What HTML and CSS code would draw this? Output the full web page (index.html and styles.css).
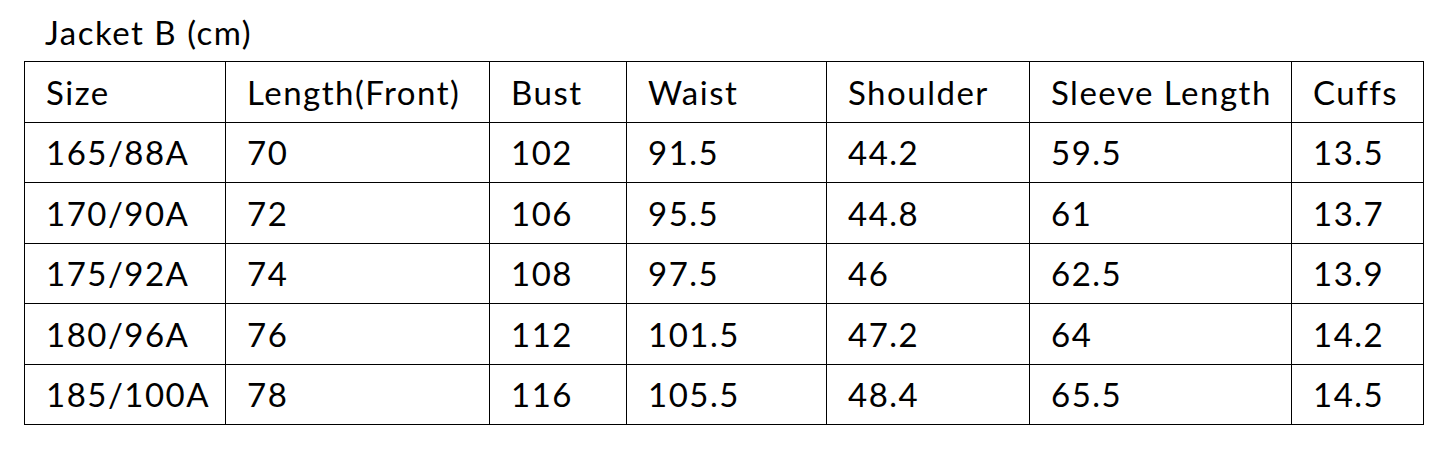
FILE: index.html
```html
<!DOCTYPE html>
<html>
<head>
<meta charset="utf-8">
<link rel="stylesheet" href="styles.css">
</head>
<body>
<div class="sheet">
  <div class="title">Jacket B (cm)</div>
  <table class="sizes">
    <colgroup>
      <col class="c1"><col class="c2"><col class="c3"><col class="c4"><col class="c5"><col class="c6"><col class="c7">
    </colgroup>
    <tr><td>Size</td><td>Length(Front)</td><td>Bust</td><td>Waist</td><td>Shoulder</td><td>Sleeve Length</td><td>Cuffs</td></tr>
    <tr><td>165/88A</td><td>70</td><td>102</td><td>91.5</td><td>44.2</td><td>59.5</td><td>13.5</td></tr>
    <tr><td>170/90A</td><td>72</td><td>106</td><td>95.5</td><td>44.8</td><td>61</td><td>13.7</td></tr>
    <tr><td>175/92A</td><td>74</td><td>108</td><td>97.5</td><td>46</td><td>62.5</td><td>13.9</td></tr>
    <tr><td>180/96A</td><td>76</td><td>112</td><td>101.5</td><td>47.2</td><td>64</td><td>14.2</td></tr>
    <tr><td>185/100A</td><td>78</td><td>116</td><td>105.5</td><td>48.4</td><td>65.5</td><td>14.5</td></tr>
  </table>
</div>
</body>
</html>
```
FILE: styles.css
```css
html, body {
  margin: 0;
  padding: 0;
  background: #fff;
}
.sheet {
  padding: 14px 0 0 24px;
  font-family: "Lato", "Liberation Sans", sans-serif;
  color: #000;
  font-size: 33px;
  letter-spacing: 1.5px;
}
.title {
  line-height: 36px;
  padding-left: 21px;
  height: 47px;
  box-sizing: border-box;
}
.sizes {
  border-collapse: collapse;
  table-layout: fixed;
  width: 1399px;
  font-size: 33px;
}
.sizes td {
  border: 1.5px solid #000;
  height: 60.5px;
  padding: 0 0 0 21px;
  box-sizing: border-box;
  line-height: 36px;
  white-space: nowrap;
  vertical-align: middle;
}
.c1 { width: 201px; }
.c2 { width: 264px; }
.c3 { width: 137px; }
.c4 { width: 200px; }
.c5 { width: 203px; }
.c6 { width: 262px; }
.c7 { width: 132px; }
```
